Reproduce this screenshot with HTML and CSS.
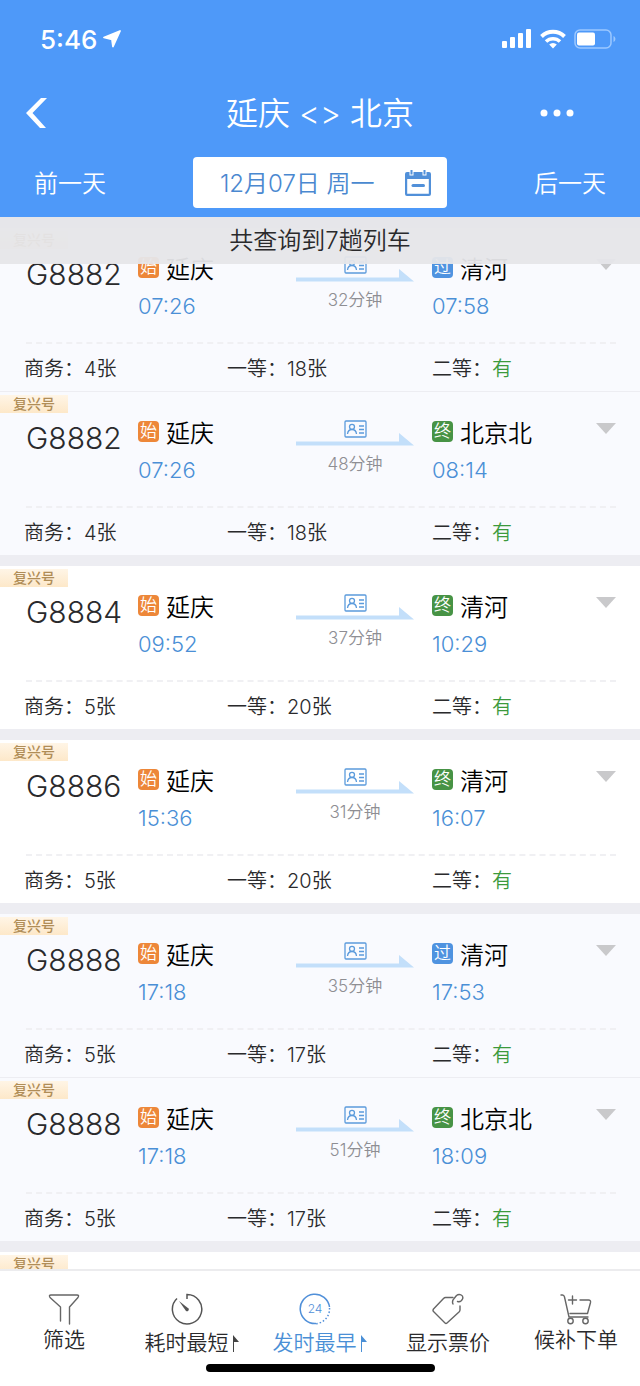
FILE: index.html
```
<!DOCTYPE html>
<html lang="zh-CN">
<head>
  <meta charset="UTF-8">
  <meta name="viewport" content="width=device-width, initial-scale=1.0">
  <title>延庆 - 北京</title>
  <link rel="stylesheet" href="styles.css">
</head>
<body>
  <header class="header">
    <div class="status">
      <div class="clock">
        <span>5:46</span>
        <svg width="18" height="18" viewBox="0 0 18 18"><path d="M17 1L10 16.500L9 9.500L1 7.500Z" fill="#fff" stroke="#fff" stroke-width="1.800" stroke-linejoin="round"/></svg>
      </div>
      <div class="signals">
        <svg width="30" height="20" viewBox="0 0 30 20" fill="#fff">
          <rect x="0" y="12" width="5" height="7" rx="1"/>
          <rect x="8" y="8" width="5" height="11" rx="1"/>
          <rect x="16" y="4" width="5" height="15" rx="1"/>
          <rect x="24" y="0" width="5" height="19" rx="1"/>
        </svg>
        <svg width="26" height="20" viewBox="0 0 26 20" fill="none" stroke="#fff" stroke-width="4">
          <path d="M1.500 7.500a16.500 16.500 0 0 1 23 0"/>
          <path d="M6 12.500a10 10 0 0 1 14 0" stroke-width="3.500"/>
          <path d="M13 19.500l-3.800-4a5.500 5.500 0 0 1 7.600 0z" fill="#fff" stroke="none"/>
        </svg>
        <svg width="42" height="20" viewBox="0 0 42 20">
          <rect x="1" y="1" width="36" height="18" rx="5" fill="none" stroke="#9cc8ff" stroke-width="1.500"/>
          <rect x="3" y="3.500" width="18" height="13" rx="2" fill="#fff"/>
          <path d="M39.500 7v6c2.500-1 2.500-5 0-6z" fill="#9cc8ff"/>
        </svg>
      </div>
    </div>

    <div class="title-bar">
      <button class="icon-btn" aria-label="返回">
        <svg width="22" height="30" viewBox="0 0 22 30"><path d="M15 0h6L6.500 15L20 30h-6L0 15Z" fill="#fff"/></svg>
      </button>
      <h1>延庆 &lt;&gt; 北京</h1>
      <button class="icon-btn more" aria-label="更多">
        <svg width="34" height="8" viewBox="0 0 34 8" fill="#fff"><circle cx="4" cy="4" r="3.500"/><circle cx="17" cy="4" r="3.500"/><circle cx="30" cy="4" r="3.500"/></svg>
      </button>
    </div>

    <div class="date-bar">
      <button class="day-btn">前一天</button>
      <button class="date-btn">
        <span>12月07日 周一</span>
        <svg width="26" height="26" viewBox="0 0 26 26">
          <path d="M2 2h2.500v3.500h4V2h9v3.500h4V2H24q2 0 2 2v20q0 2-2 2H2q-2 0-2-2V4q0-2 2-2zM2.200 9v14.800h21.600V9z" fill="#5190d9" fill-rule="evenodd"/>
          <path d="M6.500 0v4.500M19.500 0v4.500" stroke="#5190d9" stroke-width="2"/>
          <path d="M8 15.500h10.500" stroke="#5190d9" stroke-width="3" stroke-linecap="round"/>
        </svg>
      </button>
      <button class="day-btn">后一天</button>
    </div>
  </header>

  <main class="results">
    <p class="summary">共查询到7趟列车</p>
    <div class="list" id="train-list"></div>
  </main>

  <nav class="tabbar">
    <div class="tabs">
      <button class="tab tab-plain">
        <svg width="32" height="32" viewBox="0 0 32 32" fill="none" stroke="#666" stroke-width="1.400" stroke-linejoin="round" stroke-linecap="round">
          <path d="M12.500 28V14L2 4.500Q.500 2 3 2h26q2.500 0 1 2.500L21.500 14v17"/>
        </svg>
        <span>筛选</span>
      </button>
      <button class="tab">
        <svg class="dial" width="32" height="32" viewBox="0 0 32 32" fill="none" stroke="#555" stroke-width="1.500">
          <path d="M16 6V1.500A14.700 14.700 0 1 1 6 5.500"/>
          <path d="M8 8l9.500 7.500a1.800 1.800 0 0 1-2.500 2.500z" fill="#555" stroke="none"/>
        </svg>
        <span class="sort">耗时最短<svg width="8" height="17" viewBox="0 0 8 17"><path d="M1 0l6 7H2v10H1z" fill="#444"/></svg></span>
      </button>
      <button class="tab active">
        <svg class="dial" width="32" height="32" viewBox="0 0 32 32" fill="none" stroke="#5190d9" stroke-width="1.500">
          <path d="M17 30.500A14.700 14.700 0 1 1 30.500 14"/>
          <path d="M30.500 15A14.700 14.700 0 0 1 16 30.700" stroke-dasharray="1.500 2"/>
          <text class="hours" x="16" y="20" text-anchor="middle">24</text>
        </svg>
        <span class="sort">发时最早<svg width="8" height="17" viewBox="0 0 8 17"><path d="M1 0l6 7H2v10H1z" fill="#4a8fd6"/></svg></span>
      </button>
      <button class="tab">
        <svg width="32" height="32" viewBox="0 0 32 32" fill="none" stroke="#666" stroke-width="1.400" stroke-linejoin="round" stroke-linecap="round">
          <path d="M21 4.500h-7.500q-1 0-2 1L1.500 16q-1 1.500 0 2.500L13 30q1 1 2 0L27 19q1-1 1-2v-4"/>
          <path d="M21 11q-1.500-3 1.500-6l2-2.500c3-2.500 7.500 0 6 3.500-1 2.500-3 3-5 2.500"/>
        </svg>
        <span>显示票价</span>
      </button>
      <button class="tab tab-plain">
        <svg width="32" height="32" viewBox="0 0 32 32" fill="none" stroke="#666" stroke-width="1.400" stroke-linejoin="round" stroke-linecap="round">
          <path d="M1 2h1.500q1.500 0 2 2l4.500 20h19"/>
          <path d="M10 20.500h17.500L30.500 9.500q.500-2.500-2-2.500H20"/>
          <path d="M12.500 3v8M8.500 7h8"/>
          <circle cx="10.500" cy="28" r="2.700"/><circle cx="25.500" cy="28" r="2.700"/>
        </svg>
        <span>候补下单</span>
      </button>
    </div>
    <div class="home-indicator"></div>
  </nav>

  <script>
    const trains = [
      { no: 'G8882', start: '07:26', mins: 32, type: 'pass', to: '清河', end: '07:58', biz: 4, first: 18, tint: true, joined: true },
      { no: 'G8882', start: '07:26', mins: 48, type: 'last', to: '北京北', end: '08:14', biz: 4, first: 18, tint: true },
      { no: 'G8884', start: '09:52', mins: 37, type: 'last', to: '清河', end: '10:29', biz: 5, first: 20 },
      { no: 'G8886', start: '15:36', mins: 31, type: 'last', to: '清河', end: '16:07', biz: 5, first: 20 },
      { no: 'G8888', start: '17:18', mins: 35, type: 'pass', to: '清河', end: '17:53', biz: 5, first: 17, tint: true, joined: true },
      { no: 'G8888', start: '17:18', mins: 51, type: 'last', to: '北京北', end: '18:09', biz: 5, first: 17, tint: true }
    ];
    const tagText = { pass: '过', last: '终' };

    // joined = same train continues in the next card, thin line instead of a gap
    const cards = trains.map(t => `
      <article class="card ${t.tint ? 'tint' : ''} ${t.joined ? 'joined' : ''}">
        <div class="badge">复兴号</div>
        <div class="trip">
          <h2 class="number">${t.no}</h2>
          <div>
            <div class="station"><span class="tag first">始</span>延庆</div>
            <div class="time">${t.start}</div>
          </div>
          <div class="route">
            <svg width="118" height="26" viewBox="0 0 118 26">
              <path d="M0 21.500h103V13l15 12.500H0z" fill="#c3dffa"/>
              <g fill="none" stroke="#5b9bdc" stroke-width="1.300">
                <rect x="49" y="1" width="21" height="16" rx="1"/>
                <circle cx="56" cy="6.800" r="2.500"/>
                <path d="M51.500 14q.500-4.500 4.500-4.500t4.500 4.500M63 6h5M63 9.500h5M63 13h5"/>
              </g>
            </svg>
            <span>${t.mins}分钟</span>
          </div>
          <div>
            <div class="station"><span class="tag ${t.type}">${tagText[t.type]}</span>${t.to}</div>
            <div class="time">${t.end}</div>
          </div>
          <button class="expand" aria-label="展开">
            <svg width="20" height="11" viewBox="0 0 20 11"><path d="M0 0h20L10 11z" fill="#c9c9cb"/></svg>
          </button>
        </div>
        <div class="seats">
          <span>商务：${t.biz}张</span>
          <span>一等：${t.first}张</span>
          <span>二等：<b>有</b></span>
        </div>
      </article>`);

    cards.push('<article class="card stub"><div class="badge">复兴号</div></article>');
    document.getElementById('train-list').innerHTML = cards.join('');
  </script>
</body>
</html>
```
FILE: styles.css
```
* {
  box-sizing: border-box;
}
body {
  margin: 0;
  height: 100vh;
  display: flex;
  flex-direction: column;
  font-family: Inter, "Noto Sans CJK SC", sans-serif;
  font-weight: 350;
  color: #2a2a2c;
  background: #fff;
}
h1, h2, p {
  margin: 0;
  font-weight: inherit;
}
svg {
  display: block;
  flex: none;
}
button {
  padding: 0;
  border: none;
  background: none;
  font: inherit;
  color: inherit;
  cursor: pointer;
}

/* header */
.header {
  background: #4e99f9;
  color: #fff;
}
.status {
  display: flex;
  justify-content: space-between;
  align-items: center;
  height: 78px;
  padding: 0 24px 0 40px;
}
.clock {
  display: flex;
  align-items: center;
  gap: 6px;
  font-size: 26px;
  font-weight: 500;
}
.signals {
  display: flex;
  align-items: center;
  gap: 8px;
}
.title-bar {
  display: grid;
  grid-template-columns: 1fr auto 1fr;
  align-items: center;
  height: 70px;
  padding: 0 66px 0 26px;
}
.title-bar h1 {
  font-size: 32px;
  padding: 0 0 4px 40px;
}
.icon-btn {
  justify-self: start;
}
.more {
  justify-self: end;
}
.date-bar {
  display: grid;
  grid-template-columns: 5fr 8fr 5fr;
  align-items: center;
  height: 69px;
  padding: 0 34px;
  font-size: 24px;
}
.day-btn {
  padding-bottom: 2px;
  text-align: left;
  white-space: nowrap;
}
.day-btn:last-child {
  text-align: right;
}
.date-btn {
  display: flex;
  justify-content: space-between;
  align-items: center;
  height: 51px;
  padding: 0 16px 0 27px;
  border-radius: 4px;
  background: #fff;
  color: #4a88d0;
}
.date-btn span {
  padding-bottom: 2px;
}

/* results */
.results {
  position: relative;
  flex: 1;
  min-height: 0;
  overflow: hidden;
  background: #ededf2;
}
.summary {
  position: absolute;
  top: 0;
  left: 0;
  right: 0;
  z-index: 1;
  line-height: 47px;
  text-align: center;
  font-size: 24px;
  background: rgba(230, 230, 233, 0.95);
}
.list {
  padding-top: 11px;
}
.card {
  margin-bottom: 11px;
  padding-top: 3px;
  background: #fff;
}
.card.tint {
  background: #f9fafe;
}
.card.joined {
  margin-bottom: 1px;
}
.card.stub {
  margin-bottom: 0;
}
.badge {
  width: 68px;
  padding-left: 13px;
  line-height: 18px;
  font-size: 14px;
  font-weight: 500;
  color: #b08d57;
  background: linear-gradient(to bottom, #fff5e6, #fde8c9);
}
.trip {
  display: grid;
  grid-template-columns: 112fr 158fr 136fr 164fr 20px;
  align-items: start;
  margin: 0 24px 0 26px;
  padding: 7px 0 22px;
  border-bottom: 2px dashed #f0f0f3;
}
.number {
  font-size: 30px;
  line-height: 36px;
}
.station {
  display: flex;
  align-items: center;
  gap: 7px;
  height: 23px;
  font-size: 24px;
  white-space: nowrap;
  color: #000;
}
.tag {
  width: 21px;
  line-height: 21px;
  border-radius: 4px;
  text-align: center;
  font-size: 17px;
  color: #fff;
}
.tag.first {
  background: #ed8739;
}
.tag.pass {
  background: #4f93e0;
}
.tag.last {
  background: #479345;
}
.time {
  margin-top: 13px;
  line-height: 28px;
  font-size: 22px;
  color: #4a8fd6;
}
.route {
  display: flex;
  flex-direction: column;
  width: 118px;
  gap: 6px;
  text-align: center;
  line-height: 24px;
  font-size: 17px;
  color: #8e8e93;
}
.expand {
  margin-top: 3px;
}
.seats {
  display: grid;
  grid-template-columns: 203fr 205fr 184fr;
  align-items: center;
  height: 47px;
  margin: 0 24px;
  font-size: 20px;
}
.seats b {
  font-weight: inherit;
  color: #3c9a3c;
}

/* bottom bar */
.tabbar {
  padding: 22px 0 14px;
  border-top: 2px solid #ececee;
  background: #fff;
}
.tabs {
  display: grid;
  grid-template-columns: repeat(5, 1fr);
  align-items: start;
}
.tab {
  display: flex;
  flex-direction: column;
  align-items: center;
  gap: 4px;
  line-height: 28px;
  font-size: 21px;
  white-space: nowrap;
}
.tab-plain {
  gap: 1px;
}
.dial {
  margin-right: 11px;
}
.sort {
  display: flex;
  align-items: center;
  gap: 3px;
}
.active {
  color: #4a8fd6;
}
.hours {
  font-size: 12px;
  fill: #5190d9;
  stroke: none;
}
.home-indicator {
  width: 229px;
  height: 8px;
  margin: 7px auto 0;
  border-radius: 4px;
  background: #000;
}
```
